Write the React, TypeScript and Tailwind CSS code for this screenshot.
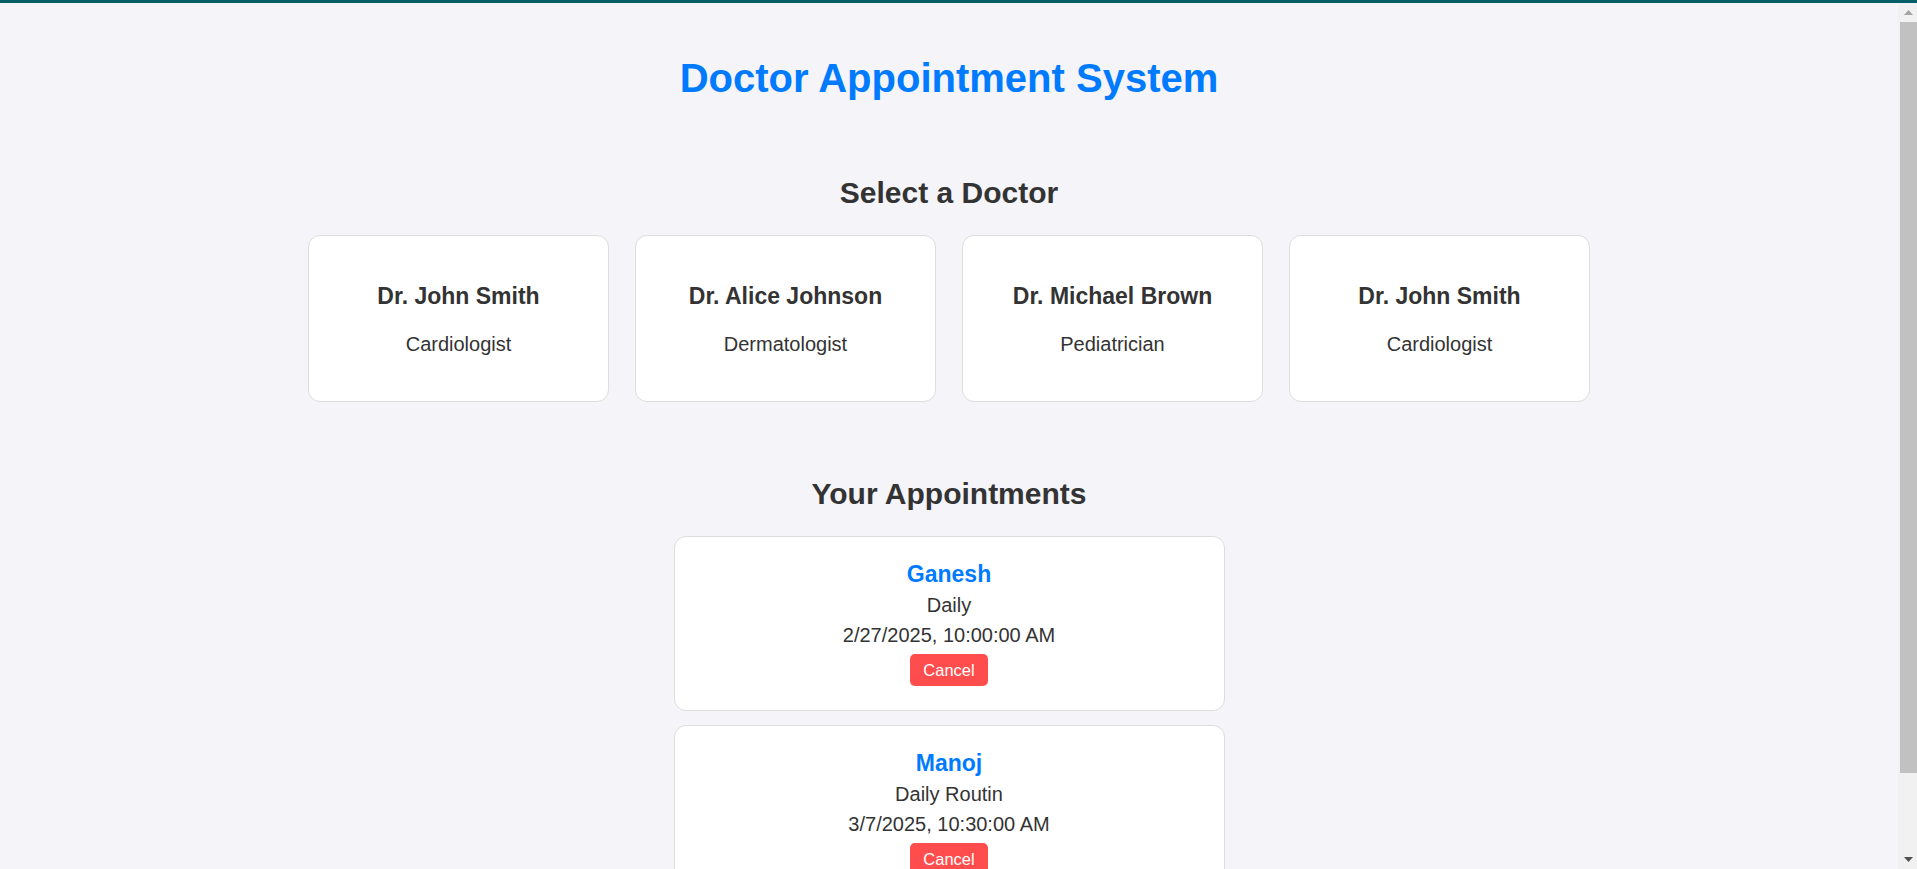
import React from 'react';

type Doctor = {
  name: string;
  specialty: string;
};

type Appointment = {
  patient: string;
  reason: string;
  time: string;
};

const doctors: Doctor[] = [
  { name: 'Dr. John Smith', specialty: 'Cardiologist' },
  { name: 'Dr. Alice Johnson', specialty: 'Dermatologist' },
  { name: 'Dr. Michael Brown', specialty: 'Pediatrician' },
  { name: 'Dr. John Smith', specialty: 'Cardiologist' },
];

const appointments: Appointment[] = [
  { patient: 'Ganesh', reason: 'Daily', time: '2/27/2025, 10:00:00 AM' },
  { patient: 'Manoj', reason: 'Daily Routin', time: '3/7/2025, 10:30:00 AM' },
];

function DoctorCard({ doctor }: { doctor: Doctor }) {
  return (
    <div className="flex w-[301px] flex-col items-center rounded-[12px] border border-[#dddddd] bg-white pb-[45px] pt-[47px]">
      <h3 className="text-[23px] font-bold leading-[27px] text-[#333333]">{doctor.name}</h3>
      <p className="mt-[23px] text-[20px] leading-[23px] text-[#333333]">{doctor.specialty}</p>
    </div>
  );
}

function AppointmentCard({ appointment }: { appointment: Appointment }) {
  return (
    <div className="flex w-[551px] flex-col items-center rounded-[12px] border border-[#dddddd] bg-white pb-[24px] pt-[24px]">
      <h3 className="text-[23px] font-bold leading-[27px] text-[#007bff]">{appointment.patient}</h3>
      <p className="mt-[6px] text-[20px] leading-[23px] text-[#333333]">{appointment.reason}</p>
      <p className="mt-[7px] text-[20px] leading-[23px] text-[#333333]">{appointment.time}</p>
      <button className="mt-[7px] flex h-[32px] items-center rounded-[5px] bg-[#ff4d4d] px-[13px] text-[16.5px] leading-[19px] text-white">
        Cancel
      </button>
    </div>
  );
}

// the browser's scrollbar, as it shows in the screenshot
function ScrollBar() {
  return (
    <div className="flex w-[19px] shrink-0 flex-col bg-[#f1f1f1]">
      <div className="flex h-[19px] items-center justify-center pl-[2px]">
        <svg width="9" height="5" viewBox="0 0 9 5">
          <polygon points="4.5,0 9,5 0,5" fill="#a3a3a3" />
        </svg>
      </div>
      <div className="ml-[2px] h-[751px] bg-[#c1c1c1]" />
      <div className="flex-1" />
      <div className="flex h-[19px] items-center justify-center pl-[2px]">
        <svg width="9" height="5" viewBox="0 0 9 5">
          <polygon points="0,0 9,0 4.5,5" fill="#505050" />
        </svg>
      </div>
    </div>
  );
}

export default function App() {
  return (
    <div className="flex h-screen flex-col bg-[#f4f4f9] font-['Liberation_Sans',Arial,sans-serif]">
      <div className="h-[3px] shrink-0 bg-[#075e66]" />

      <div className="flex min-h-0 flex-1">
        <div className="min-w-0 flex-1 overflow-hidden">
          <div className="flex flex-col items-center pb-[53px] pt-[52px] text-[#333333]">
            <h1 className="text-[40px] font-bold leading-[46px] text-[#007bff]">Doctor Appointment System</h1>

            <h2 className="mt-[74px] text-[30px] font-bold leading-[35px]">Select a Doctor</h2>
            <div className="mt-[25px] flex gap-[26px]">
              {doctors.map((doctor, i) => (
                <DoctorCard key={i} doctor={doctor} />
              ))}
            </div>

            <h2 className="mt-[74px] text-[30px] font-bold leading-[35px]">Your Appointments</h2>
            <div className="mt-[25px] flex flex-col gap-[14px]">
              {appointments.map((appointment, i) => (
                <AppointmentCard key={i} appointment={appointment} />
              ))}
            </div>
          </div>
        </div>

        <ScrollBar />
      </div>
    </div>
  );
}
